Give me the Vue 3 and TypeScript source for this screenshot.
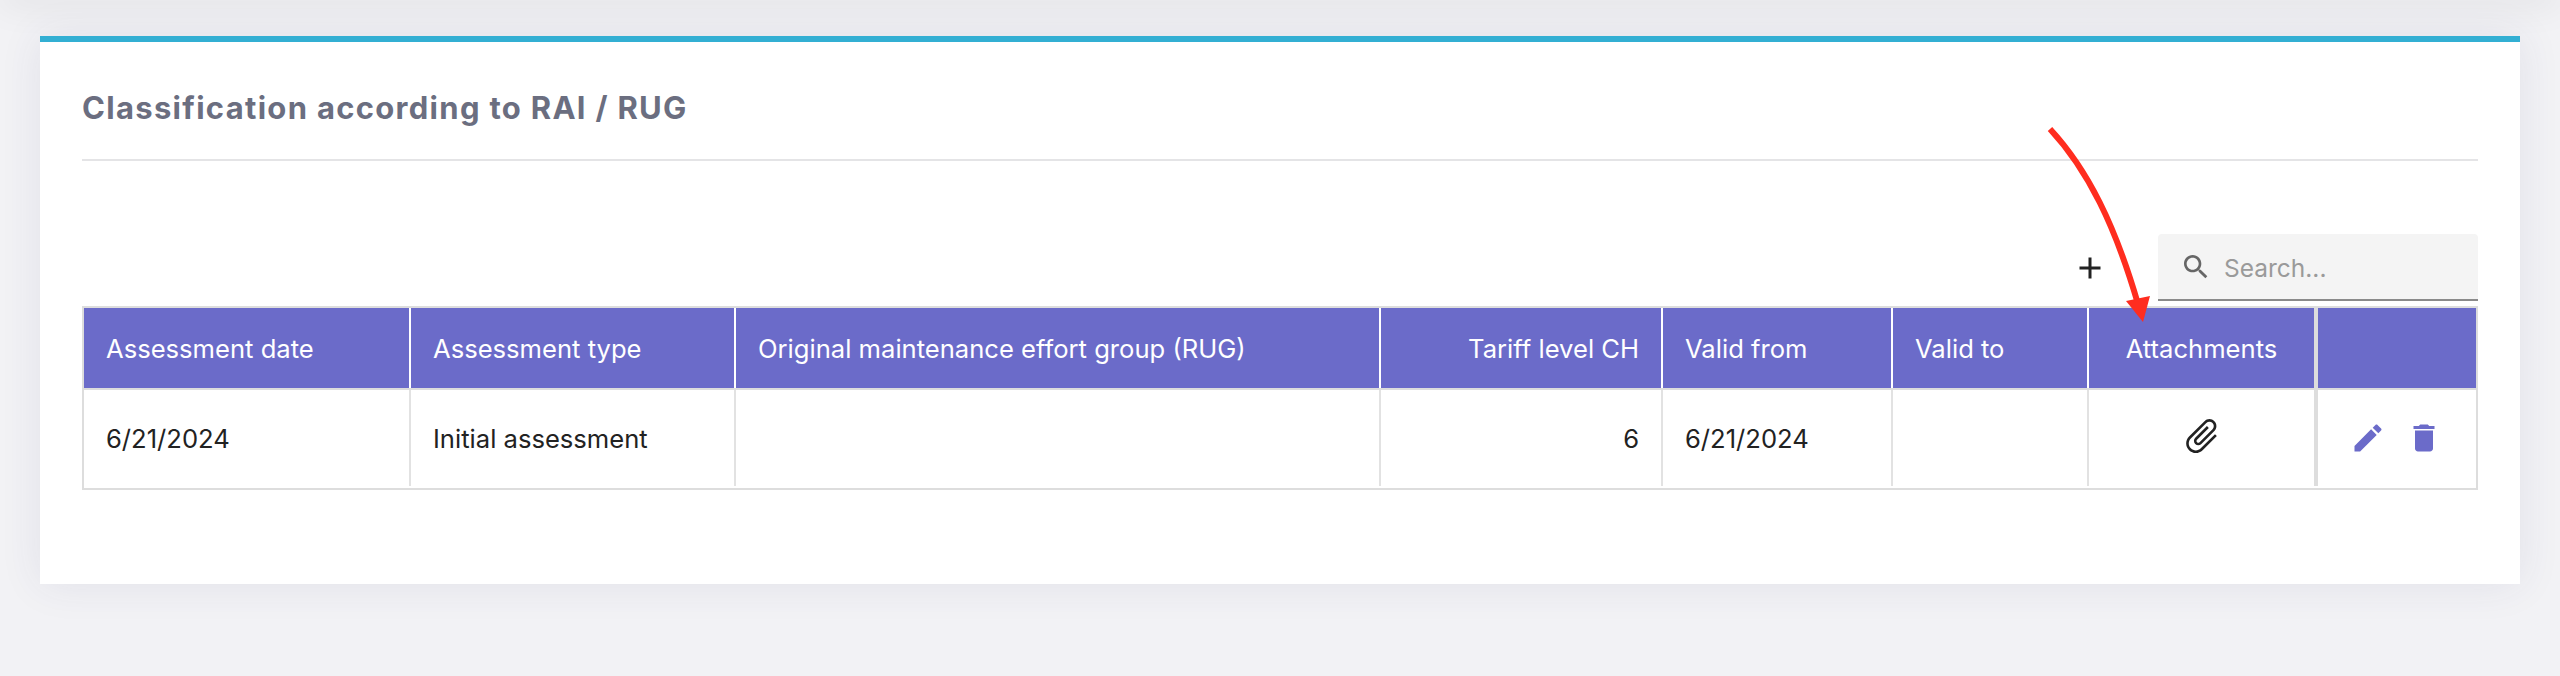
<script setup lang="ts">
interface Column {
  label: string;
  value: string;
  width: number;
  align?: 'right' | 'center';
  icon?: boolean;
}

const columns: Column[] = [
  { label: 'Assessment date', value: '6/21/2024', width: 327 },
  { label: 'Assessment type', value: 'Initial assessment', width: 325 },
  { label: 'Original maintenance effort group (RUG)', value: '', width: 645 },
  { label: 'Tariff level CH', value: '6', width: 282, align: 'right' },
  { label: 'Valid from', value: '6/21/2024', width: 230 },
  { label: 'Valid to', value: '', width: 196 },
  { label: 'Attachments', value: '', width: 229, align: 'center', icon: true },
];

const gridColumns = columns.map((c) => `${c.width}px`).join(' ') + ' 1fr';
</script>

<template>
  <div class="page">
    <div class="topbar"></div>

    <section class="card">
      <h2 class="title">Classification according to RAI / RUG</h2>

      <div class="toolbar">
        <button class="add" type="button" aria-label="Add">
          <svg viewBox="0 0 24 24" width="36" height="36"><path d="M19 13h-6v6h-2v-6H5v-2h6V5h2v6h6v2z" /></svg>
        </button>
        <div class="search">
          <svg viewBox="0 0 24 24" width="32" height="32">
            <path d="M15.5 14h-.79l-.28-.27C15.41 12.59 16 11.11 16 9.5 16 5.91 13.09 3 9.5 3S3 5.91 3 9.5 5.91 16 9.5 16c1.61 0 3.09-.59 4.23-1.57l.27.28v.79l5 4.99L20.49 19l-4.99-5zm-6 0C7.01 14 5 11.99 5 9.5S7.01 5 9.5 5 14 7.01 14 9.5 11.99 14 9.5 14z" />
          </svg>
          <span>Search...</span>
        </div>
      </div>

      <div class="table">
        <div class="row head" :style="{ gridTemplateColumns: gridColumns }">
          <div
            v-for="col in columns"
            :key="col.label"
            class="cell"
            :class="col.align"
          >
            {{ col.label }}
          </div>
          <div class="cell actions-cell"></div>
        </div>
        <div class="row body" :style="{ gridTemplateColumns: gridColumns }">
          <div
            v-for="col in columns"
            :key="col.label"
            class="cell"
            :class="col.align"
          >
            <svg v-if="col.icon" class="clip" viewBox="0 0 24 24" width="42" height="42">
              <path d="M16.5 6v11.5c0 2.21-1.79 4-4 4s-4-1.79-4-4V5c0-1.38 1.12-2.5 2.5-2.5s2.5 1.12 2.5 2.5v10.5c0 .55-.45 1-1 1s-1-.45-1-1V6H10v9.5c0 1.38 1.12 2.5 2.5 2.5s2.5-1.12 2.5-2.5V5c0-2.21-1.79-4-4-4S7 2.79 7 5v12.5c0 3.04 2.46 5.5 5.5 5.5s5.5-2.46 5.5-5.5V6h-1.5z" />
            </svg>
            <template v-else>{{ col.value }}</template>
          </div>
          <div class="cell actions-cell">
            <svg viewBox="0 0 24 24" width="36" height="36">
              <path d="M3 17.25V21h3.75L17.81 9.94l-3.75-3.75L3 17.25zM20.71 7.04c.39-.39.39-1.02 0-1.41l-2.34-2.34c-.39-.39-1.02-.39-1.41 0l-1.83 1.83 3.75 3.75 1.83-1.83z" />
            </svg>
            <svg viewBox="0 0 24 24" width="36" height="36">
              <path d="M6 19c0 1.1.9 2 2 2h8c1.1 0 2-.9 2-2V7H6v12zM19 4h-3.5l-1-1h-5l-1 1H5v2h14V4z" />
            </svg>
          </div>
        </div>
      </div>
    </section>

    <!-- red annotation drawn over the screenshot -->
    <svg class="arrow" viewBox="0 0 2560 676" width="2560" height="676">
      <path d="M2050 129 C2088 170 2115 225 2138 304" fill="none" stroke="#ff2d1f" stroke-width="6" />
      <polygon points="2126,301 2150,296 2143,322" fill="#ff2d1f" />
    </svg>
  </div>
</template>

<style>
html,
body {
  background: #f2f2f5;
}
</style>

<style scoped>
.page {
  position: relative;
  height: 676px;
  overflow: hidden;
  padding-top: 36px;
  box-sizing: border-box;
  font-family: Inter, Lato, sans-serif;
  font-size: 25.6px;
  color: #222;
}

.topbar {
  position: absolute;
  top: -10px;
  left: 0;
  right: 0;
  height: 10px;
  box-shadow: 0 0 36px rgba(0, 0, 0, 0.16);
}

.card {
  margin: 0 40px;
  height: 548px;
  box-sizing: border-box;
  background: #fff;
  border-top: 6px solid #33afd3;
  padding: 0 42px;
  box-shadow: 0 0 40px rgba(60, 60, 110, 0.09);
}

.title {
  margin: 0;
  height: 119px;
  box-sizing: border-box;
  border-bottom: 2px solid #e4e4e6;
  padding-top: 48px;
  font-size: 31px;
  line-height: 36px;
  font-weight: 700;
  letter-spacing: 1.3px;
  color: #6b6e80;
}

.toolbar {
  display: flex;
  justify-content: flex-end;
  align-items: center;
  gap: 50px;
  margin-top: 73px;
  height: 67px;
}

.add {
  display: flex;
  padding: 0;
  border: 0;
  background: none;
  fill: #222;
}

.search {
  display: flex;
  align-items: center;
  gap: 12px;
  width: 320px;
  height: 67px;
  box-sizing: border-box;
  padding-left: 22px;
  background: #f4f4f4;
  border-bottom: 2px solid #8a8a8a;
  border-radius: 4px 4px 0 0;
  color: #9a9a9a;
  fill: #666;
  font-size: 24.5px;
}

.search span {
  padding-top: 3px;
}

.table {
  margin-top: 5px;
  border: 2px solid #dddddd;
}

.row {
  display: grid;
}

.head {
  height: 80px;
  background: #6b6bc9;
  color: #fff;
  border-bottom: 2px solid #dddddd;
  box-sizing: content-box;
}

.body {
  height: 96px;
  padding-bottom: 2px;
}

.cell {
  display: flex;
  align-items: center;
  padding: 0 22px;
  box-sizing: border-box;
  min-width: 0;
  white-space: nowrap;
}

.head .cell {
  border-right: 2px solid #ffffff;
}

.body .cell {
  border-right: 2px solid #e2e2e2;
}

.head .cell:nth-child(7) {
  border-right: 4px solid #dddddd;
}

.body .cell:nth-child(7) {
  border-right: 4px solid #dddddd;
}

.head .actions-cell,
.body .actions-cell {
  border-right: 0;
}

.right {
  justify-content: flex-end;
}

.center {
  justify-content: center;
}

.clip {
  margin-bottom: 4px;
  transform: rotate(45deg);
  fill: #222;
}

.actions-cell {
  justify-content: flex-start;
  gap: 20px;
  padding: 0 0 0 32px;
  fill: #6b6bc9;
}

.arrow {
  position: absolute;
  top: 0;
  left: 0;
  pointer-events: none;
}
</style>
